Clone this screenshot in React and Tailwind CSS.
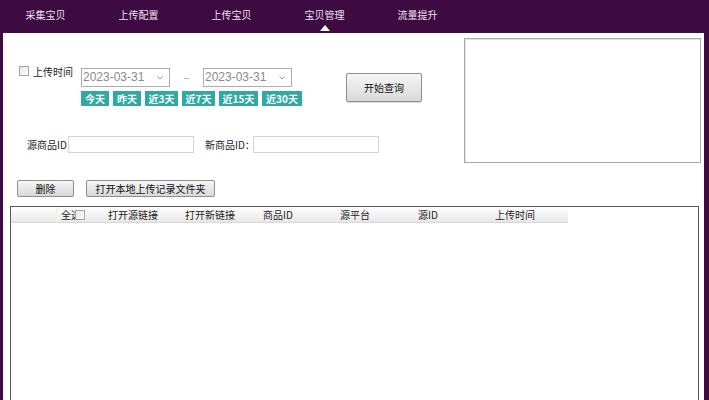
const tabs = ["采集宝贝", "上传配置", "上传宝贝", "宝贝管理", "流量提升"]
const quick = [
  { label: "今天", w: "w-[28px]" },
  { label: "昨天", w: "w-[28px]" },
  { label: "近3天", w: "w-[33px]" },
  { label: "近7天", w: "w-[33px]" },
  { label: "近15天", w: "w-[39px]" },
  { label: "近30天", w: "w-[40px]" },
]
const cols = [
  { label: "打开源链接", w: "w-[77px]" },
  { label: "打开新链接", w: "w-[78px]" },
  { label: "商品ID", w: "w-[77px]" },
  { label: "源平台", w: "w-[78px]" },
  { label: "源ID", w: "w-[77px]" },
  { label: "上传时间", w: "w-[93px]" },
]

const font = { fontFamily: '"Noto Sans CJK SC", "Liberation Sans", sans-serif' }

function DateBox() {
  return (
    <div className="w-[89px] h-[19px] border border-[#abadb3] bg-white flex items-center justify-between pl-[1px] pr-[6px]">
      <span className="text-[12px] leading-[17px] text-[#8a8a8a]" style={{ fontFamily: '"Liberation Sans", sans-serif' }}>
        2023-03-31
      </span>
      <svg width="6" height="4" viewBox="0 0 6 4">
        <path d="M0.5 0.5 L3 3 L5.5 0.5" fill="none" stroke="#9a9a9a" strokeWidth="1" />
      </svg>
    </div>
  )
}

function GrayButton({ children, className }) {
  return (
    <button className={`border border-[#8e8f8f] rounded-[2px] bg-gradient-to-b from-[#f6f6f6] to-[#d9d9d9] text-[10px] text-[#111] flex items-center justify-center whitespace-nowrap ${className}`}>
      {children}
    </button>
  )
}

export default function App() {
  return (
    <div className="w-[709px] h-[400px] bg-[#3d0b41] flex flex-col overflow-hidden" style={font}>
      <div className="h-[33px] flex shrink-0 ml-[-1px]">
        {tabs.map((t, i) => (
          <div key={t} className="w-[93px] flex flex-col items-center pt-[8px]">
            <span className="text-[10px] leading-[13px] text-[#ece3ee]">{t}</span>
            {i === 3 && (
              <div className="mt-[4px] w-0 h-0 border-x-[5px] border-x-transparent border-b-[6px] border-b-white" />
            )}
          </div>
        ))}
      </div>

      <div className="flex-1 bg-white ml-[3px] mr-[5px] flex flex-col">
        <div className="flex h-[130px]">
          <div className="flex-1">
            <div className="flex items-start mt-[33px] pl-[16px]">
              <div className="w-[10px] h-[10px] border border-[#a5a5a5] bg-gradient-to-br from-[#e6e6e6] to-white" />
              <span className="ml-[4px] w-[48px] text-[10px] leading-[11px] text-[#222] whitespace-nowrap">上传时间</span>
              <div className="mt-[2px] flex flex-col">
                <div className="flex items-center">
                  <DateBox />
                  <span className="w-[33px] text-center text-[11px] text-[#999]">–</span>
                  <DateBox />
                </div>
                <div className="mt-[4px] flex gap-[4px]">
                  {quick.map((q) => (
                    <div
                      key={q.label}
                      className={`${q.w} h-[15px] bg-[#2fa9a2] text-white text-[10px] font-bold leading-[15px] text-center whitespace-nowrap`}
                    >
                      {q.label}
                    </div>
                  ))}
                </div>
              </div>
              <GrayButton className="ml-[44px] mt-[7px] w-[76px] h-[29px] shadow-[0_1px_1px_rgba(0,0,0,0.15)]">开始查询</GrayButton>
            </div>

            <div className="flex items-center mt-[30px] pl-[24px]">
              <span className="text-[10px] text-[#222] w-[41px] whitespace-nowrap">源商品ID</span>
              <div className="w-[126px] h-[17px] border border-[#d5d5d5]" />
              <span className="ml-[11px] text-[10px] text-[#222] w-[48px] whitespace-nowrap">新商品ID：</span>
              <div className="w-[126px] h-[17px] border border-[#d5d5d5]" />
            </div>
          </div>
          <div className="w-[237px] h-[125px] mt-[5px] mr-[3px] border border-[#a9a9a9] shadow-[inset_1px_1px_0_#e4e4e4]" />
        </div>

        <div className="flex mt-[17px] pl-[14px] gap-[12px]">
          <GrayButton className="w-[57px] h-[17px]">删除</GrayButton>
          <GrayButton className="w-[129px] h-[17px]">打开本地上传记录文件夹</GrayButton>
        </div>

        <div className="mt-[9px] ml-[7px] mr-[5px] h-[220px] border border-[#5a5a5a]">
          <div className="flex h-[16px] w-[557px] bg-gradient-to-b from-white to-[#e8e8e8] border-b border-[#d8d8d8] text-[10px] leading-[16px] text-[#222]">
            <div className="w-[46px] border-r border-[#eeeeee]" />
            <div className="w-[31px] relative overflow-hidden pl-[4px] whitespace-nowrap">
              <span>全选</span>
              <div className="absolute left-[18px] top-[3px] w-[10px] h-[10px] border border-[#a5a5a5] bg-gradient-to-br from-[#e6e6e6] to-white" />
            </div>
            {cols.map((c) => (
              <div key={c.label} className={`${c.w} pl-[20px] whitespace-nowrap`}>
                {c.label}
              </div>
            ))}
          </div>
        </div>
      </div>
    </div>
  )
}
